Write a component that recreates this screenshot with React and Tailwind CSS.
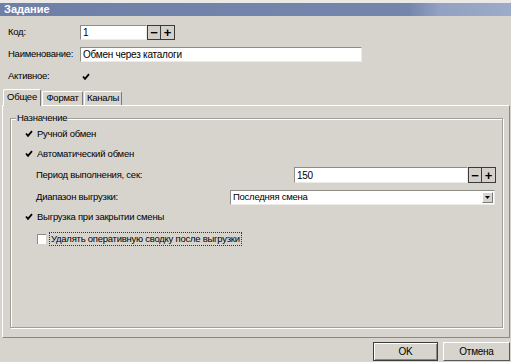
import React from "react";

function Check() {
  return (
    <svg width="8" height="8" viewBox="0 0 8 8" className="shrink-0">
      <path d="M1 3.5 L3 5.8 L7 1.2" fill="none" stroke="#000" strokeWidth="1.8" />
    </svg>
  );
}

function Spin() {
  return (
    <div className="flex h-full">
      <div className="w-[14px] h-full border border-[#3a3a3a] bg-[#d4d1cb] flex items-center justify-center text-[13px] font-bold leading-none">
        −
      </div>
      <div className="w-[14px] h-full border border-l-0 border-[#3a3a3a] bg-[#d4d1cb] flex items-center justify-center text-[13px] font-bold leading-none">
        +
      </div>
    </div>
  );
}

function Input({ value, className }) {
  return (
    <div
      className={`h-full bg-white border-t border-l border-[#8e8c87] border-r border-b border-r-[#ecebe8] border-b-[#ecebe8] flex items-center pl-[2px] text-[10px] ${className}`}
    >
      {value}
    </div>
  );
}

export default function App() {
  return (
    <div className="w-[511px] h-[362px] bg-[#d7d4ce] font-['Liberation_Sans',Arial,sans-serif] text-[9.5px] tracking-[-0.25px] text-black flex flex-col overflow-hidden">
      {/* title */}
      <div className="h-[3px] bg-[#ebe9e5]" />
      <div className="h-[13px] flex items-center pl-[4px] text-white font-bold text-[11px] tracking-normal bg-[linear-gradient(90deg,#6f80a8_0%,#7586ad_80%,#93a1c2_86%,#9dabca_100%)]">
        Задание
      </div>

      {/* fields */}
      <div className="pl-[8px] pt-[9px] flex flex-col gap-[7px]">
        <div className="flex items-center h-[15px]">
          <span className="w-[72px]">Код:</span>
          <Input value="1" className="w-[67px]" />
          <Spin />
        </div>
        <div className="flex items-center h-[15px]">
          <span className="w-[72px]">Наименование:</span>
          <Input value="Обмен через каталоги" className="w-[282px]" />
        </div>
        <div className="flex items-center h-[15px]">
          <span className="w-[74px]">Активное:</span>
          <Check />
        </div>
      </div>

      {/* tabs */}
      <div className="mt-[4px] h-[17px] flex items-end pl-[3px]">
        <div className="relative z-10 h-[17px] w-[38px] -mb-[1px] bg-[#d7d4ce] border-t border-l border-white border-r border-r-[#7c7a76] rounded-t-[2px] flex items-center justify-center pb-[1px]">
          Общее
        </div>
        <div className="h-[14px] w-[41px] ml-[1px] border-t border-l border-white border-r border-r-[#7c7a76] rounded-t-[2px] flex items-center justify-center">
          Формат
        </div>
        <div className="h-[14px] w-[38px] ml-[1px] border-t border-l border-white border-r border-r-[#7c7a76] rounded-t-[2px] flex items-center justify-center">
          Каналы
        </div>
      </div>

      {/* panel */}
      <div className="ml-[2px] w-[508px] h-[233px] border-t border-l border-white border-r border-b border-r-[#8a8884] border-b-[#8a8884]">
        <div className="ml-[7px] mt-[12px] w-[493px] h-[210px] border border-[#a19f9a] shadow-[inset_1px_1px_0_#ffffff,1px_1px_0_#ffffff] flex flex-col">
          <div className="-mt-[7px] h-[12px] flex items-center pl-[5px]">
            <span className="bg-[#d7d4ce] px-[1px]">Назначение</span>
          </div>

          <div className="mt-[4px] h-[12px] flex items-center gap-[4px] pl-[14px]">
            <Check />
            <span>Ручной обмен</span>
          </div>
          <div className="mt-[8px] h-[12px] flex items-center gap-[4px] pl-[14px]">
            <Check />
            <span>Автоматический обмен</span>
          </div>

          <div className="mt-[7px] h-[16px] flex items-center pl-[25px]">
            <span className="w-[258px]">Период выполнения, сек:</span>
            <Input value="150" className="w-[174px]" />
            <Spin />
          </div>

          <div className="mt-[7px] h-[15px] flex items-center pl-[25px]">
            <span className="w-[194px]">Диапазон выгрузки:</span>
            <div className="w-[265px] h-full bg-white border-t border-l border-[#8e8c87] border-r border-b border-r-[#ecebe8] border-b-[#ecebe8] flex items-center justify-between pl-[2px]">
              <span>Последняя смена</span>
              <div className="w-[11px] h-[11px] mr-[1px] bg-[#d7d4ce] border-t border-l border-white border-r border-b border-r-[#7c7a76] border-b-[#7c7a76] flex items-center justify-center">
                <svg width="5" height="3" viewBox="0 0 5 3">
                  <path d="M0 0 H5 L2.5 3 Z" fill="#000" />
                </svg>
              </div>
            </div>
          </div>

          <div className="mt-[6px] h-[12px] flex items-center gap-[4px] pl-[14px]">
            <Check />
            <span>Выгрузка при закрытии смены</span>
          </div>

          <div className="mt-[9px] h-[14px] flex items-center pl-[26px]">
            <div className="w-[9px] h-[10px] bg-white border-t border-l border-[#8e8c87]" />
            <span className="ml-[3px] h-[14px] flex items-center px-[1px] border border-dotted border-[#333]">
              Удалять оперативную сводку после выгрузки
            </span>
          </div>
        </div>
      </div>

      {/* footer */}
      <div className="mt-[4px] flex justify-end gap-[5px] pr-[1px]">
        <button className="w-[65px] h-[19px] border border-[#3c3c3c] bg-[#d7d4ce] text-[10px] shadow-[inset_1px_1px_0_#ffffff,inset_-1px_-1px_0_#8a8884]">
          OK
        </button>
        <button className="w-[67px] h-[19px] border-t border-l border-white border-r border-b border-r-[#5a5956] border-b-[#5a5956] bg-[#d7d4ce] text-[10px]">
          Отмена
        </button>
      </div>
    </div>
  );
}
